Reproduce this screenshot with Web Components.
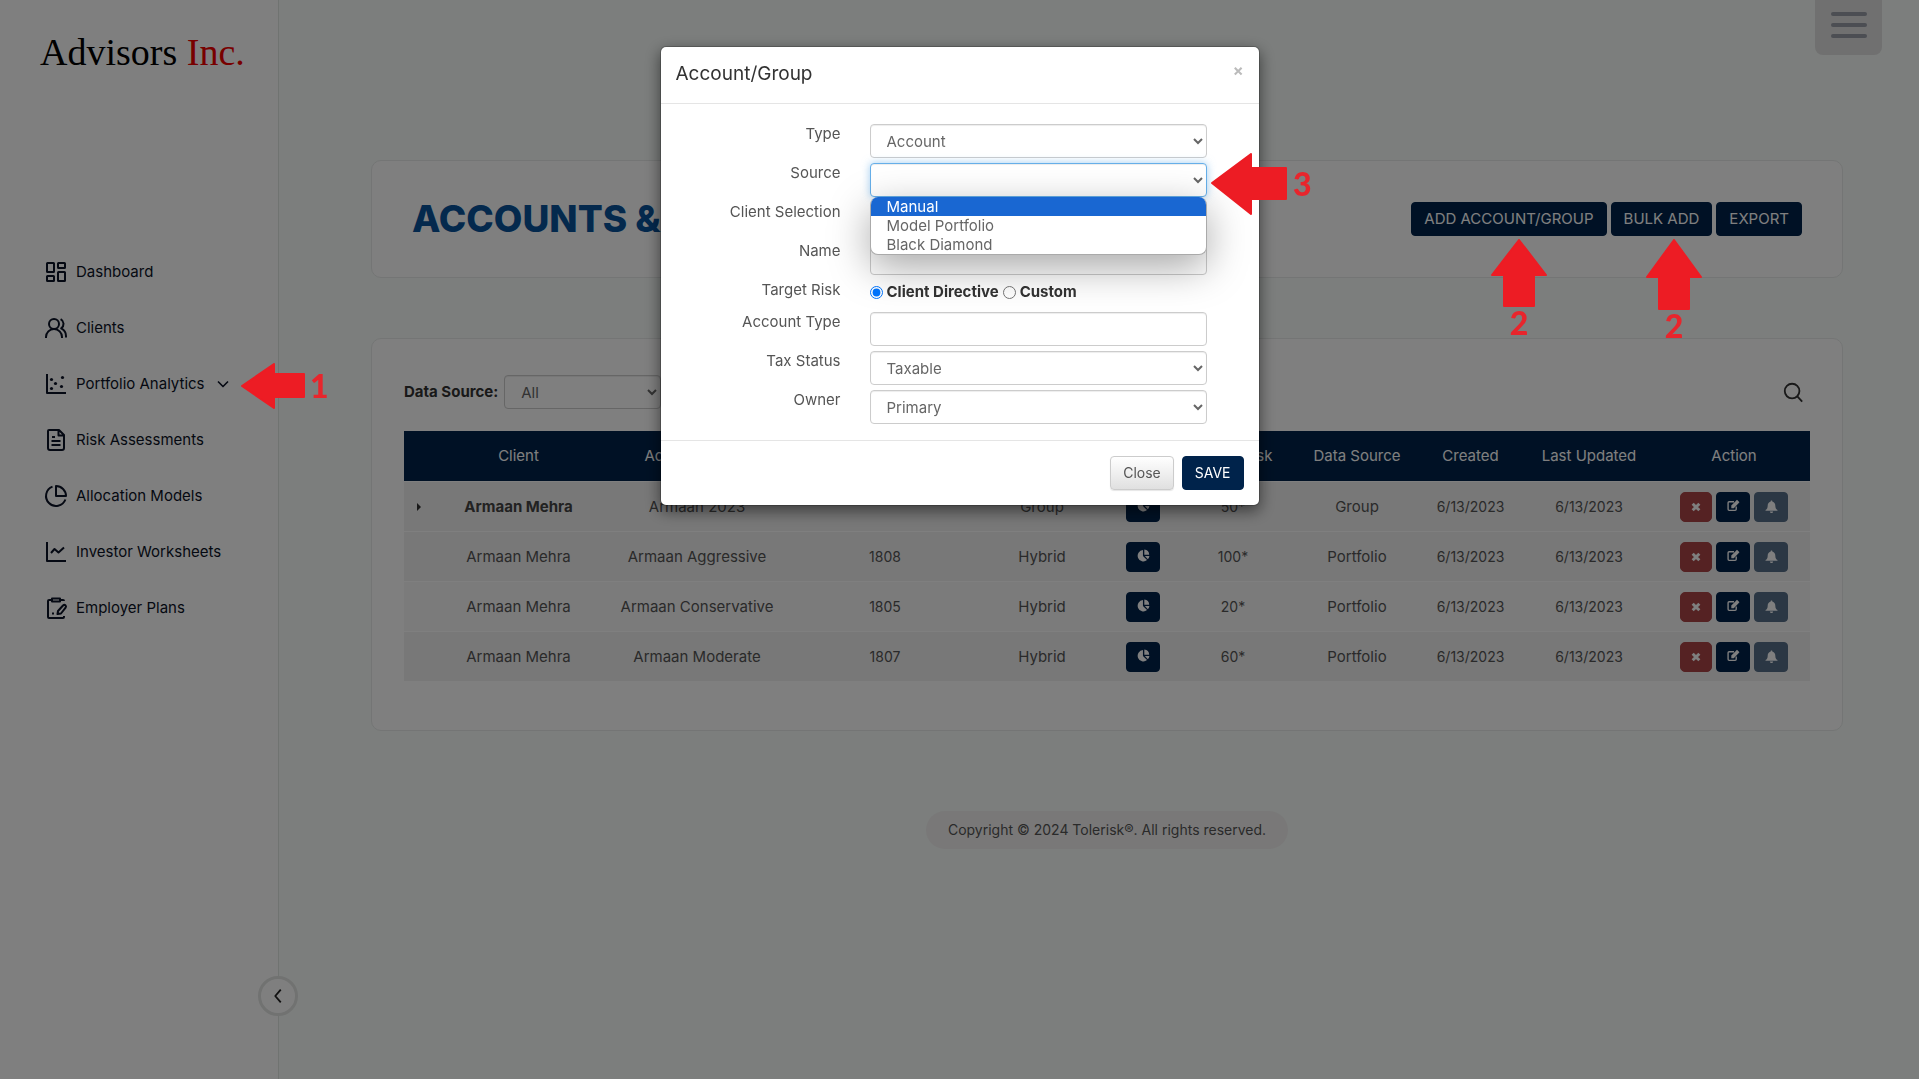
<!DOCTYPE html>
<html lang="en">
<head>
<meta charset="utf-8">
<title>Accounts</title>
<style>
body {
  margin: 0;
  min-height: 100vh;
  font: 15px/20px Inter, "Open Sans", sans-serif;
  color: #555;
  background: #f8fdfa;
}
</style>
</head>
<body>
<app-shell></app-shell>

<script>
/* icons: 24px grid, stroked with the current colour unless a path says otherwise */
const icons = {
  dashboard: '<rect x="3" y="3" width="7" height="9" rx=".5"/><rect x="14" y="3" width="7" height="5" rx=".5"/><rect x="14" y="12" width="7" height="9" rx=".5"/><rect x="3" y="16" width="7" height="5" rx=".5"/>',
  clients: '<circle cx="10" cy="8" r="5"/><path d="M2 22v-1a8 8 0 0 1 16 0v1M16.600 3.200c3.600 2 4 6.400.6 9.100 3 1.400 4.800 4.500 4.800 7.700v1.500"/>',
  scatter: '<path d="M3 2v19h19"/><g fill="currentColor" stroke="none"><circle cx="7.500" cy="7.500" r="1.600"/><circle cx="18.500" cy="5.500" r="1.600"/><circle cx="11.500" cy="11.500" r="1.600"/><circle cx="17.500" cy="14.500" r="1.600"/><circle cx="7.500" cy="16.500" r="1.600"/></g>',
  file: '<path d="M5 2h10l5 5v13a2 2 0 0 1-2 2H6a2 2 0 0 1-2-2V3a1 1 0 0 1 1-1zM14.500 2v5.500H20M8 9h3M7.500 13h9M7.500 17h9"/>',
  pie: '<path d="M8.500 2.600A10 10 0 1 0 21.400 15.500M12 2a10 10 0 0 1 10 10H12z"/>',
  line: '<path d="M3 2v19h19M7 13l3.500-4 4 3.500L20 7.500"/>',
  clipboard: '<path d="M8 4H5a1 1 0 0 0-1 1v16a1 1 0 0 0 1 1h14a1 1 0 0 0 1-1v-1M16 4h3a1 1 0 0 1 1 1M8 2.500h8v3H8zM8 17.500h2M14 15l5-5.500c1.800-1.500 3.800.3 2.600 2.200L17 17.500l-3.500.5z"/>',
  chevron: '<path d="M6 9l6 6 6-6"/>',
  back: '<path d="M15 5l-6 7 6 7"/>',
  search: '<circle cx="11" cy="11" r="8"/><path d="M17 17l5 5.500"/>',
  cross: '<path d="M4 4l16 16M20 4L4 20" stroke-width="7"/>',
  edit: '<path d="M17 14v5a2 2 0 0 1-2 2H4a2 2 0 0 1-2-2V7a2 2 0 0 1 2-2h9" stroke-width="2.500"/><path d="M8 17v-5L18.500 1.500l4.500 4.500L12.500 17z" fill="currentColor" stroke="none"/>',
  bell: '<path d="M12 1c1.200 0 1.800.8 1.800 2C17.500 4 19 7 19 10c0 4.500 1.500 7 4 8.500V20H1v-1.500C3.500 17 5 14.500 5 10c0-3 1.500-6 5.200-7 0-1.200.6-2 1.800-2zM9 21h6a3 3 0 0 1-6 0z" fill="currentColor" stroke="none"/>',
  chart: '<path d="M11 2v11l7.500 7.500A10.500 10.500 0 1 1 11 2z" fill="currentColor" stroke="none"/><path d="M13.500 1a10 10 0 0 1 9 9.500h-9zM14.500 13H23a10 10 0 0 1-3 6z" fill="currentColor" stroke="none"/>'
}

class UiIcon extends HTMLElement {
  constructor () {
    super()
    this.attachShadow({ mode: "open" })
  }

  connectedCallback () {
    const name = this.getAttribute("name")
    this.shadowRoot.innerHTML = `
      <style>
        :host { display: inline-block; width: 24px; height: 24px; }
        svg { display: block; width: 100%; height: 100%; }
      </style>
      <svg viewBox="0 0 24 24" fill="none" stroke="currentColor" stroke-width="2" stroke-linejoin="round" aria-hidden="true">${icons[name]}</svg>`
  }
}

class UiButton extends HTMLElement {
  constructor () {
    super()
    this.attachShadow({ mode: "open" })
  }

  connectedCallback () {
    const label = this.getAttribute("label")
    this.shadowRoot.innerHTML = `
      <style>
        :host { display: inline-block; }
        button {
          display: flex;
          align-items: center;
          justify-content: center;
          box-sizing: border-box;
          width: 100%;
          height: 34px;
          padding: 0 12px;
          border: 1px solid #00234b;
          border-radius: 4px;
          background: #00234b;
          color: #fff;
          font: inherit;
          white-space: nowrap;
        }
        :host([kind="light"]) button {
          border-color: #ccc;
          background: linear-gradient(#fff, #e0e0e0);
          color: #555;
          box-shadow: 0 1px 1px rgba(0, 0, 0, .1);
        }
        :host([small]) button { width: 34px; height: 30px; padding: 0 0 2px; }
        :host([kind="danger"]) button { width: 32px; padding: 0; border-color: #aa4446; background: #aa4446; border-radius: 5px; }
        :host([kind="muted"]) button { border-color: #566f88; background: #566f88; padding: 0; }
      </style>
      <button type="button" ${label ? `aria-label="${label}"` : ""}><slot></slot></button>`
  }
}

class SideNav extends HTMLElement {
  constructor () {
    super()
    this.attachShadow({ mode: "open" })
    this.items = [
      ["dashboard", "Dashboard"],
      ["clients", "Clients"],
      ["scatter", "Portfolio Analytics"],
      ["file", "Risk Assessments"],
      ["pie", "Allocation Models"],
      ["line", "Investor Worksheets"],
      ["clipboard", "Employer Plans"]
    ]
  }

  connectedCallback () {
    const links = this.items.map(([icon, text]) => `
      <a href="#"><ui-icon name="${icon}"></ui-icon><span>${text}</span>${icon === "scatter" ? '<ui-icon class="more" name="chevron"></ui-icon>' : ""}</a>`).join("")

    this.shadowRoot.innerHTML = `
      <style>
        :host {
          position: relative;
          display: block;
          box-sizing: border-box;
          width: 279px;
          border-right: 1px solid #e0e6e3;
          background: #fff;
        }
        .brand {
          display: block;
          height: 244px;
          padding: 32px 0 0 40px;
          box-sizing: border-box;
          color: #000;
          font: 38px/40px "Liberation Serif", serif;
          text-decoration: none;
          white-space: nowrap;
        }
        .brand b { color: #f00000; font-weight: 400; }
        nav { display: flex; flex-direction: column; }
        nav a {
          display: flex;
          align-items: center;
          gap: 8px;
          height: 56px;
          padding-left: 44px;
          color: #0b1226;
          text-decoration: none;
        }
        .more { width: 20px; height: 20px; }
        button {
          position: absolute;
          right: -20px;
          bottom: 63px;
          display: grid;
          place-items: center;
          width: 40px;
          height: 40px;
          padding: 0;
          border: 3px solid #e2e4e3;
          border-radius: 50%;
          background: #fff;
          color: #222;
        }
        button ui-icon { width: 22px; height: 22px; }
      </style>
      <a class="brand" href="#">Advisors <b>Inc.</b></a>
      <nav>${links}</nav>
      <button type="button" aria-label="Collapse menu"><ui-icon name="back"></ui-icon></button>`
  }
}

class PageCard extends HTMLElement {
  constructor () {
    super()
    this.attachShadow({ mode: "open" })
    this.shadowRoot.innerHTML = `
      <style>
        :host {
          display: block;
          box-sizing: border-box;
          border: 1px solid #e8ebea;
          border-radius: 10px;
          background: #fff;
        }
      </style>
      <slot></slot>`
  }
}

class AccountTable extends HTMLElement {
  constructor () {
    super()
    this.attachShadow({ mode: "open" })
    this.widths = [38, 153, 204, 172, 142, 60, 120, 128, 99, 138, 152]
    this.heads = ["", "Client", "Account Name", "", "", "", "Target Risk", "Data Source", "Created", "Last Updated", "Action"]
    this.rows = [
      ["Armaan 2023", "", "Group", "50*", "Group"],
      ["Armaan Aggressive", "1808", "Hybrid", "100*", "Portfolio"],
      ["Armaan Conservative", "1805", "Hybrid", "20*", "Portfolio"],
      ["Armaan Moderate", "1807", "Hybrid", "60*", "Portfolio"]
    ]
  }

  createRow ([name, number, type, risk, source], index) {
    const group = index === 0
    return `
      <tr>
        <td>${group ? '<i class="caret"></i>' : ""}</td>
        <td>${group ? "<b>Armaan Mehra</b>" : "Armaan Mehra"}</td>
        <td>${name}</td>
        <td class="figure">${number}</td>
        <td>${type}</td>
        <td><ui-button small label="Chart"><ui-icon name="chart"></ui-icon></ui-button></td>
        <td class="figure">${risk}</td>
        <td>${source}</td>
        <td class="figure">6/13/2023</td>
        <td class="figure">6/13/2023</td>
        <td>
          <div class="actions">
            <ui-button small kind="danger" label="Delete"><ui-icon class="tiny" name="cross"></ui-icon></ui-button>
            <ui-button small label="Edit"><ui-icon name="edit"></ui-icon></ui-button>
            <ui-button small kind="muted" label="Alerts"><ui-icon name="bell"></ui-icon></ui-button>
          </div>
        </td>
      </tr>`
  }

  connectedCallback () {
    this.shadowRoot.innerHTML = `
      <style>
        :host { display: block; }
        table { width: 100%; table-layout: fixed; border-collapse: collapse; }
        th { height: 50px; padding: 0; background: #00234b; color: #fff; font-weight: 400; }
        td { height: 49px; padding: 0; border-top: 1px solid #fff; text-align: center; color: #555; }
        tr { background: #f0f0f0; }
        tr:nth-child(3) { background: #f7f7f7; }
        b { color: #444; }
        td ui-button { vertical-align: middle; }
        ui-icon { width: 13px; height: 13px; }
        ui-icon.tiny { width: 10px; height: 10px; }
        .figure { font-size: 14px; }
        .actions { display: flex; justify-content: center; gap: 4px; }
        .caret {
          display: block;
          width: 0;
          margin-left: 13px;
          border: 4px solid transparent;
          border-left-color: #333;
          border-right: 0;
        }
      </style>
      <table>
        <colgroup>${this.widths.map(width => `<col style="width: ${width}px">`).join("")}</colgroup>
        <thead><tr>${this.heads.map(head => `<th scope="col">${head}</th>`).join("")}</tr></thead>
        <tbody>${this.rows.map((row, index) => this.createRow(row, index)).join("")}</tbody>
      </table>`
  }
}

/* shared look of text boxes and drop-downs */
const controlStyle = `
  input[type="text"], select {
    box-sizing: border-box;
    width: 100%;
    height: 34px;
    padding: 6px 12px;
    border: 1px solid #ccc;
    border-radius: 4px;
    outline: 0;
    background: #fff;
    box-shadow: inset 0 1px 1px rgba(0, 0, 0, .075);
    color: #666;
    font: inherit;
  }
  select { padding-right: 0; }
`

class FormField extends HTMLElement {
  constructor () {
    super()
    this.attachShadow({ mode: "open" })
  }

  connectedCallback () {
    const label = this.getAttribute("label")
    const value = this.getAttribute("value")
    const control = value === null
      ? '<input id="control" type="text">'
      : `<select id="control"><option>${value}</option></select>`

    this.shadowRoot.innerHTML = `
      <style>
        ${controlStyle}
        :host { display: grid; grid-template-columns: 180px 1fr; column-gap: 29px; align-items: start; }
        label { text-align: right; }
        .control { position: relative; }
        :host([open]) select {
          border-color: #66afe9;
          box-shadow: inset 0 1px 1px rgba(0, 0, 0, .075), 0 0 8px rgba(102, 175, 233, .6);
        }
      </style>
      <label for="control">${label}</label>
      <div class="control">${control}<slot></slot></div>`
  }
}

class OptionMenu extends HTMLElement {
  constructor () {
    super()
    this.attachShadow({ mode: "open" })
    this.shadowRoot.innerHTML = `
      <style>
        :host {
          position: absolute;
          z-index: 1;
          top: 34px;
          left: 0;
          right: 0;
        }
        ul {
          margin: 0;
          padding: 0;
          overflow: hidden;
          list-style: none;
          border: 1px solid #aaa;
          border-top: 0;
          border-radius: 8px;
          background: #fff;
          box-shadow: 0 12px 40px rgba(0, 0, 0, .35);
          line-height: 19px;
          color: #666;
        }
        li { padding: 0 16px; }
        li[aria-selected="true"] { background: #1967d2; color: #fff; }
      </style>
      <ul role="listbox" aria-label="Source">
        <li role="option" aria-selected="true">Manual</li>
        <li role="option">Model Portfolio</li>
        <li role="option">Black Diamond</li>
      </ul>`
  }
}

class AccountDialog extends HTMLElement {
  constructor () {
    super()
    this.attachShadow({ mode: "open" })
    this.shadowRoot.innerHTML = `
      <style>
        :host {
          position: fixed;
          inset: 0;
          display: flex;
          align-items: flex-start;
          justify-content: center;
          background: rgba(0, 0, 0, .5);
        }
        section {
          box-sizing: border-box;
          width: 600px;
          max-width: 100%;
          margin-top: 46px;
          border: 1px solid rgba(0, 0, 0, .2);
          border-radius: 6px;
          background: #fff;
          background-clip: padding-box;
          box-shadow: 0 5px 15px rgba(0, 0, 0, .5);
        }
        header {
          display: flex;
          justify-content: space-between;
          height: 56px;
          padding: 0 15px;
          border-bottom: 1px solid #e5e5e5;
        }
        h4 { margin: 0; font-size: 19px; line-height: 54px; font-weight: 400; color: #333; }
        header button {
          align-self: flex-start;
          padding: 12px 0;
          border: 0;
          background: none;
          color: #bbb;
          font: 700 16px/22px Inter, sans-serif;
        }
        form { display: flex; flex-direction: column; gap: 5px; padding: 20px 52px 16px 0; }
        fieldset {
          display: grid;
          grid-template-columns: 180px 1fr;
          column-gap: 29px;
          height: 27px;
          margin: 0;
          padding: 0;
          border: 0;
        }
        fieldset > span { text-align: right; }
        .choices { display: flex; align-items: center; gap: 4px; height: 24px; font-weight: 700; color: #333; }
        .choices input { width: 13px; height: 13px; margin: 0; }
        footer {
          display: flex;
          justify-content: flex-end;
          gap: 8px;
          padding: 15px;
          border-top: 1px solid #e5e5e5;
          font-size: 14px;
        }
      </style>
      <section role="dialog" aria-labelledby="title">
        <header>
          <h4 id="title">Account/Group</h4>
          <button type="button" aria-label="Dismiss">×</button>
        </header>
        <form>
          <form-field label="Type" value="Account"></form-field>
          <form-field label="Source" value="" open><option-menu></option-menu></form-field>
          <form-field label="Client Selection"></form-field>
          <form-field label="Name"></form-field>
          <fieldset aria-labelledby="risk">
            <span id="risk">Target Risk</span>
            <div class="choices">
              <input id="directive" type="radio" name="risk" checked><label for="directive">Client Directive</label>
              <input id="custom" type="radio" name="risk"><label for="custom">Custom</label>
            </div>
          </fieldset>
          <form-field label="Account Type"></form-field>
          <form-field label="Tax Status" value="Taxable"></form-field>
          <form-field label="Owner" value="Primary"></form-field>
        </form>
        <footer>
          <ui-button kind="light">Close</ui-button>
          <ui-button>SAVE</ui-button>
        </footer>
      </section>`
  }
}

/* numbered red arrows that lie over the page */
class StepMarks extends HTMLElement {
  constructor () {
    super()
    this.attachShadow({ mode: "open" })
    this.shadowRoot.innerHTML = `
      <style>
        :host { position: absolute; inset: 0; pointer-events: none; }
        .step {
          position: absolute;
          display: flex;
          align-items: center;
          gap: 4px;
          color: #e8252c;
          font: 900 32px/30px Lato, sans-serif;
        }
        .up { flex-direction: column; gap: 0; }
        svg { display: block; fill: #ed1c24; stroke: #ed1c24; stroke-width: 2; stroke-linejoin: round; }
      </style>
      <div class="step" style="left: 241px; top: 363px">
        <svg width="65" height="46"><path d="M1 23L33 1v10h30v23H33v11z"/></svg><span>1</span>
      </div>
      <div class="step up" style="left: 1491px; top: 239px">
        <svg width="56" height="69"><path d="M28 1l27 35H43v31H13V36H1z"/></svg><span>2</span>
      </div>
      <div class="step up" style="left: 1646px; top: 239px">
        <svg width="56" height="72"><path d="M28 1l27 37H43v32H13V38H1z"/></svg><span>2</span>
      </div>
      <div class="step" style="left: 1211px; top: 153px">
        <svg width="78" height="62"><path d="M1 30L40 1v14h35v31H40v15z"/></svg><span>3</span>
      </div>`
  }
}

class AppShell extends HTMLElement {
  constructor () {
    super()
    this.attachShadow({ mode: "open" })
    this.shadowRoot.innerHTML = `
      <style>
        ${controlStyle}
        :host { display: grid; grid-template-columns: auto 1fr; min-height: 100vh; }
        main { position: relative; display: flex; flex-direction: column; padding: 160px 76px 0 92px; }
        .menu {
          position: absolute;
          top: 0;
          right: 37px;
          display: flex;
          flex-direction: column;
          align-items: center;
          gap: 7px;
          width: 67px;
          height: 55px;
          padding: 12px 0 0;
          border: 0;
          border-radius: 0 0 8px 8px;
          background: #e0e0e0;
        }
        .menu i { width: 36px; height: 4px; border-radius: 2px; background: #989ca6; }
        .heading { display: flex; align-items: center; justify-content: space-between; min-height: 116px; padding: 0 40px; }
        h1 { margin: 0; font-size: 37px; line-height: 40px; font-weight: 800; color: #08529b; white-space: nowrap; }
        .buttons { display: flex; gap: 4px; }
        .list { margin-top: 60px; padding: 32px 32px 49px; }
        .filter { display: flex; align-items: center; height: 41px; margin-bottom: 19px; }
        .filter label { margin-right: 6px; font-weight: 700; color: #333; }
        .filter select { width: 157px; }
        .search { display: flex; margin-left: auto; padding: 0 6px; border: 0; background: none; color: #333; }
        .search ui-icon { width: 22px; height: 22px; }
        footer {
          align-self: center;
          margin-top: 80px;
          padding: 9px 22px;
          border-radius: 19px;
          background: #f2f1f1;
          font-size: 14px;
        }
      </style>
      <side-nav></side-nav>
      <main>
        <button class="menu" type="button" aria-label="Menu"><i></i><i></i><i></i></button>
        <page-card>
          <div class="heading">
            <h1>ACCOUNTS &amp;</h1>
            <div class="buttons">
              <ui-button>ADD ACCOUNT/GROUP</ui-button>
              <ui-button>BULK ADD</ui-button>
              <ui-button>EXPORT</ui-button>
            </div>
          </div>
        </page-card>
        <page-card class="list">
          <div class="filter">
            <label for="source">Data Source:</label>
            <select id="source"><option>All</option></select>
            <button class="search" type="button" aria-label="Search"><ui-icon name="search"></ui-icon></button>
          </div>
          <account-table></account-table>
        </page-card>
        <footer>Copyright © 2024 Tolerisk®. All rights reserved.</footer>
      </main>
      <account-dialog></account-dialog>
      <step-marks></step-marks>`
  }
}

customElements.define("ui-icon", UiIcon)
customElements.define("ui-button", UiButton)
customElements.define("side-nav", SideNav)
customElements.define("page-card", PageCard)
customElements.define("account-table", AccountTable)
customElements.define("form-field", FormField)
customElements.define("option-menu", OptionMenu)
customElements.define("account-dialog", AccountDialog)
customElements.define("step-marks", StepMarks)
customElements.define("app-shell", AppShell)
</script>
</body>
</html>
